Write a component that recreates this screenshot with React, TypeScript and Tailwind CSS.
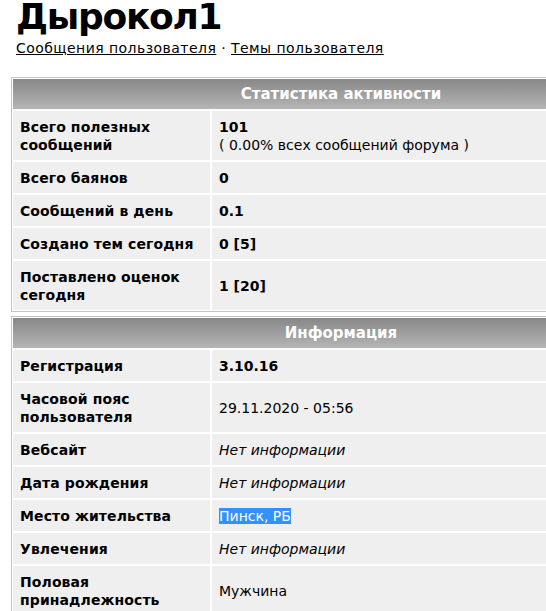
import React from 'react';

type Row = {
  label: React.ReactNode;
  value: React.ReactNode;
  tall?: boolean;
};

const statsRows: Row[] = [
  {
    label: <>Всего полезных<br />сообщений</>,
    value: (
      <>
        <b>101</b>
        <br />( 0.00% всех сообщений форума )
      </>
    ),
    tall: true,
  },
  { label: 'Всего баянов', value: <b>0</b> },
  { label: 'Сообщений в день', value: <b>0.1</b> },
  { label: 'Создано тем сегодня', value: <b>0 [5]</b> },
  { label: <>Поставлено оценок<br />сегодня</>, value: <b>1 [20]</b>, tall: true },
];

const noInfo = <i>Нет информации</i>;

const infoRows: Row[] = [
  { label: 'Регистрация', value: <b>3.10.16</b> },
  { label: <>Часовой пояс<br />пользователя</>, value: '29.11.2020 - 05:56', tall: true },
  { label: 'Вебсайт', value: noInfo },
  { label: 'Дата рождения', value: noInfo },
  { label: 'Место жительства', value: <span className="bg-[#3390ff] text-white">Пинск, РБ</span> },
  { label: 'Увлечения', value: noInfo },
  { label: <>Половая<br />принадлежность</>, value: 'Мужчина', tall: true },
];

const InfoTable: React.FC<{ title: string; rows: Row[] }> = ({ title, rows }) => (
  <div className="w-[660px] shrink-0 border border-[#c4c4c4] bg-white p-px">
    <div className="grid grid-cols-[197px_1fr] gap-[2px]">
      <div className="col-span-2 h-[30px] flex items-center justify-center bg-gradient-to-b from-[#888888] to-[#b5b5b5] text-white font-bold text-[15px]">
        {title}
      </div>
      {rows.map((row, i) => (
        <React.Fragment key={i}>
          <div
            className={`bg-[#efefef] px-[7px] flex items-center font-bold leading-[18px] tracking-[0.1px] ${row.tall ? 'h-[49px]' : 'h-[31px]'}`}
          >
            <span>{row.label}</span>
          </div>
          <div className="bg-[#efefef] px-[7px] flex items-center leading-[18px]">
            <span>{row.value}</span>
          </div>
        </React.Fragment>
      ))}
    </div>
  </div>
);

export default function App() {
  return (
    <div className="w-[546px] min-h-[611px] bg-white text-black text-[14px] font-['DejaVu_Sans','Verdana',sans-serif]">
      <div className="px-4">
        <h1 className="-mt-[2px] text-[36px] font-bold leading-[38px] tracking-[-1.3px]">Дырокол1</h1>
        <div className="mt-[3px] leading-[18px] tracking-[0.45px]">
          <a href="#" className="underline">Сообщения пользователя</a>
          {' · '}
          <a href="#" className="underline">Темы пользователя</a>
        </div>
      </div>
      <div className="w-[546px] overflow-hidden pl-[11px] mt-[20px] flex flex-col gap-[4px]">
        <InfoTable title="Статистика активности" rows={statsRows} />
        <InfoTable title="Информация" rows={infoRows} />
      </div>
    </div>
  );
}
